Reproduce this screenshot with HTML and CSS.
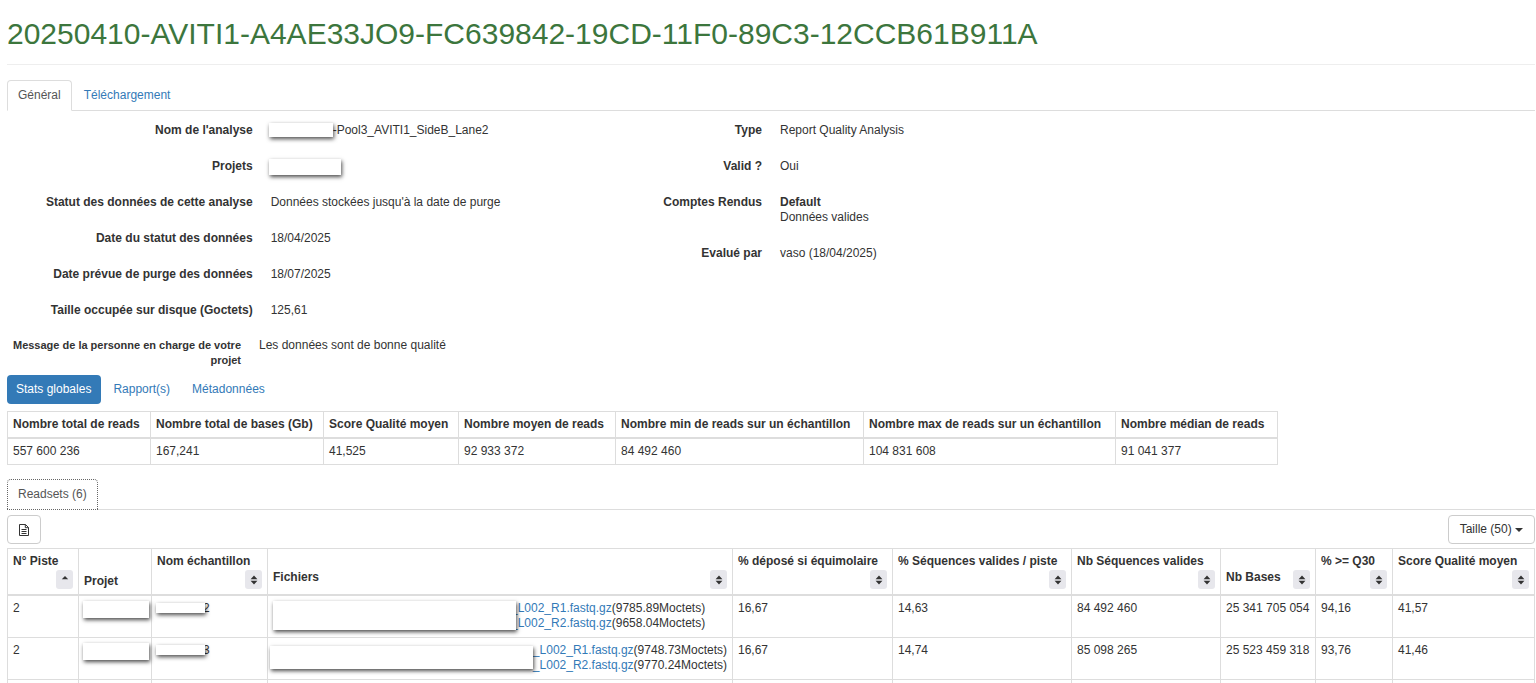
FILE: index.html
```html
<!DOCTYPE html>
<html lang="fr">
<head>
  <meta charset="UTF-8">
  <title>20250410-AVITI1-A4AE33JO9-FC639842-19CD-11F0-89C3-12CCB61B911A</title>
  <meta name="viewport" content="width=device-width, initial-scale=1">
  <link rel="stylesheet" href="styles.css">
</head>
<body>
  <svg class="defs" aria-hidden="true">
    <symbol id="sort" viewBox="0 0 8 10"><path d="M4 0.5 7.4 4.2H0.6zM4 9.5 0.6 5.8H7.4z"/></symbol>
    <symbol id="sort-up" viewBox="0 0 8 10"><path d="M4 1 7.2 4.2H0.8z"/></symbol>
  </svg>

  <header class="page-header">
    <h1>20250410-AVITI1-A4AE33JO9-FC639842-19CD-11F0-89C3-12CCB61B911A</h1>
  </header>

  <ul class="tabs">
    <li><a class="active" href="#general">Général</a></li>
    <li><a href="#download">Téléchargement</a></li>
  </ul>

  <main id="general">
    <div class="details">
      <dl>
        <div class="field"><dt>Nom de l'analyse</dt><dd><span class="mask mask-name"></span>-Pool3_AVITI1_SideB_Lane2</dd></div>
        <div class="field"><dt>Projets</dt><dd><span class="mask mask-projects"></span></dd></div>
        <div class="field"><dt>Statut des données de cette analyse</dt><dd>Données stockées jusqu'à la date de purge</dd></div>
        <div class="field"><dt>Date du statut des données</dt><dd>18/04/2025</dd></div>
        <div class="field"><dt>Date prévue de purge des données</dt><dd>18/07/2025</dd></div>
        <div class="field"><dt>Taille occupée sur disque (Goctets)</dt><dd>125,61</dd></div>
      </dl>
      <dl>
        <div class="field"><dt>Type</dt><dd>Report Quality Analysis</dd></div>
        <div class="field"><dt>Valid ?</dt><dd>Oui</dd></div>
        <div class="field"><dt>Comptes Rendus</dt><dd><strong>Default</strong><br>Données valides</dd></div>
        <div class="field"><dt>Evalué par</dt><dd>vaso (18/04/2025)</dd></div>
      </dl>
    </div>
    <dl class="message">
      <dt>Message de la personne en charge de votre projet</dt>
      <dd>Les données sont de bonne qualité</dd>
    </dl>

    <ul class="pills">
      <li><a class="active" href="#stats">Stats globales</a></li>
      <li><a href="#reports">Rapport(s)</a></li>
      <li><a href="#metadata">Métadonnées</a></li>
    </ul>

    <table class="table stats" id="stats">
      <colgroup>
        <col class="w-143"><col class="w-173"><col class="w-135"><col class="w-157"><col class="w-248"><col class="w-252"><col class="w-162">
      </colgroup>
      <thead>
        <tr>
          <th>Nombre total de reads</th>
          <th>Nombre total de bases (Gb)</th>
          <th>Score Qualité moyen</th>
          <th>Nombre moyen de reads</th>
          <th>Nombre min de reads sur un échantillon</th>
          <th>Nombre max de reads sur un échantillon</th>
          <th>Nombre médian de reads</th>
        </tr>
      </thead>
      <tbody>
        <tr>
          <td>557 600 236</td>
          <td>167,241</td>
          <td>41,525</td>
          <td>92 933 372</td>
          <td>84 492 460</td>
          <td>104 831 608</td>
          <td>91 041 377</td>
        </tr>
      </tbody>
    </table>

    <ul class="tabs tabs-readsets">
      <li><a class="active focused" href="#readsets">Readsets (6)</a></li>
    </ul>

    <div class="toolbar">
      <button type="button" class="btn btn-export" aria-label="Exporter">
        <svg width="10" height="12" viewBox="0 0 10 12"><path d="M0.5 0.5H6.5L9.5 3.5V11.5H0.5zM6.3 0.5V3.7H9.5M2.5 5.5H7.5M2.5 7.5H7.5M2.5 9.5H7.5"/></svg>
      </button>
      <button type="button" class="btn">Taille (50) <span class="caret"></span></button>
    </div>

    <table class="table readsets" id="readsets">
      <colgroup>
        <col class="w-71"><col class="w-73"><col class="w-116"><col><col class="w-160"><col class="w-179"><col class="w-149"><col class="w-95"><col class="w-77"><col class="w-142">
      </colgroup>
      <thead>
        <tr>
          <th><div class="head stacked"><span>N° Piste</span><button type="button" class="sort" aria-label="Trier"><svg><use href="#sort-up"/></svg></button></div></th>
          <th>Projet</th>
          <th><div class="head stacked"><span>Nom échantillon</span><button type="button" class="sort" aria-label="Trier"><svg><use href="#sort"/></svg></button></div></th>
          <th><div class="head"><span>Fichiers</span><button type="button" class="sort" aria-label="Trier"><svg><use href="#sort"/></svg></button></div></th>
          <th><div class="head stacked"><span>% déposé si équimolaire</span><button type="button" class="sort" aria-label="Trier"><svg><use href="#sort"/></svg></button></div></th>
          <th><div class="head stacked"><span>% Séquences valides / piste</span><button type="button" class="sort" aria-label="Trier"><svg><use href="#sort"/></svg></button></div></th>
          <th><div class="head stacked"><span>Nb Séquences valides</span><button type="button" class="sort" aria-label="Trier"><svg><use href="#sort"/></svg></button></div></th>
          <th><div class="head"><span>Nb Bases</span><button type="button" class="sort" aria-label="Trier"><svg><use href="#sort"/></svg></button></div></th>
          <th><div class="head stacked"><span>% &gt;= Q30</span><button type="button" class="sort" aria-label="Trier"><svg><use href="#sort"/></svg></button></div></th>
          <th><div class="head stacked"><span>Score Qualité moyen</span><button type="button" class="sort" aria-label="Trier"><svg><use href="#sort"/></svg></button></div></th>
        </tr>
      </thead>
      <tbody>
        <tr>
          <td>2</td>
          <td><span class="mask mask-project"></span></td>
          <td><span class="mask mask-sample"></span>2</td>
          <td>
            <div class="files">
              <span class="mask mask-files"></span>
              <div><a href="#r1">_L002_R1.fastq.gz</a>(9785.89Moctets)<br><a href="#r2">_L002_R2.fastq.gz</a>(9658.04Moctets)</div>
            </div>
          </td>
          <td>16,67</td>
          <td>14,63</td>
          <td>84 492 460</td>
          <td>25 341 705 054</td>
          <td>94,16</td>
          <td>41,57</td>
        </tr>
        <tr>
          <td>2</td>
          <td><span class="mask mask-project"></span></td>
          <td><span class="mask mask-sample"></span>3</td>
          <td>
            <div class="files">
              <span class="mask mask-files-wide"></span>
              <div><a href="#r1">_L002_R1.fastq.gz</a>(9748.73Moctets)<br><a href="#r2">_L002_R2.fastq.gz</a>(9770.24Moctets)</div>
            </div>
          </td>
          <td>16,67</td>
          <td>14,74</td>
          <td>85 098 265</td>
          <td>25 523 459 318</td>
          <td>93,76</td>
          <td>41,46</td>
        </tr>
        <tr><td></td><td></td><td></td><td></td><td></td><td></td><td></td><td></td><td></td><td></td></tr>
      </tbody>
    </table>
  </main>
</body>
</html>
```

FILE: styles.css
```css
* {
  box-sizing: border-box;
}

body {
  margin: 0;
  padding: 0 1px 0 7px;
  height: 100vh;
  overflow: hidden;
  background: #fff;
  color: #333;
  font-family: "Liberation Sans", Arial, sans-serif;
  font-size: 12px;
  line-height: 15px;
}

a {
  color: #337ab7;
  text-decoration: none;
}

ul, dl, dd {
  margin: 0;
  padding: 0;
  list-style: none;
}

dt, th {
  font-weight: bold;
}

.defs {
  display: none;
}

.page-header {
  padding: 16px 0 12px;
  border-bottom: 1px solid #eee;
}

.page-header h1 {
  margin: 0;
  color: #3c763d;
  font-size: 30px;
  font-weight: normal;
  line-height: 36px;
}

/* tabs */
.tabs {
  display: flex;
  margin-top: 15px;
  border-bottom: 1px solid #ddd;
}

.tabs a {
  display: block;
  margin: 0 1px -1px 0;
  padding: 7px 10px;
  border: 1px solid transparent;
  border-radius: 4px 4px 0 0;
}

.tabs a.active {
  color: #555;
  background: #fff;
  border-color: #ddd;
  border-bottom-color: #fff;
}

.tabs a.focused {
  border: 1px dotted #666;
}

/* details */
.details {
  display: grid;
  grid-template-columns: repeat(3, 1fr);
  padding-top: 12px;
}

.field {
  display: grid;
  grid-template-columns: 1fr 1fr;
  margin-bottom: 21px;
}

.field:last-child {
  margin-bottom: 20px;
}

dt {
  padding-right: 9px;
  text-align: right;
}

dd {
  padding-left: 9px;
}

.message {
  display: grid;
  grid-template-columns: 1fr 5fr;
  margin-left: -14px;
}

.message dt {
  padding-left: 9px;
  font-size: 11px;
}

/* redacted values */
.mask {
  display: inline-block;
  position: relative;
  height: 14px;
  background: #fff;
  box-shadow: 1px 2px 4px rgba(0, 0, 0, .7);
  vertical-align: top;
}

.mask-name {
  width: 64px;
  margin-left: -2px;
}

.mask-projects {
  width: 72px;
  height: 16px;
  margin: 0 0 -1px -2px;
}

.mask-project {
  width: 66px;
  height: 17px;
  margin-left: -1px;
}

.mask-sample {
  width: 49px;
  height: 10px;
  margin: 2px -2px 0 -1px;
}

.mask-files {
  width: 243px;
  height: 29px;
  margin-right: -5px;
}

.mask-files-wide {
  width: 263px;
  height: 23px;
  margin: 3px 0 0 -3px;
}

/* pills */
.pills {
  display: flex;
  gap: 3px;
  margin-top: 7px;
}

.pills a {
  display: block;
  padding: 7px 10px 7px 9px;
  border-radius: 4px;
}

.pills a.active {
  color: #fff;
  background: #337ab7;
}

/* tables */
.table {
  border-collapse: collapse;
  table-layout: fixed;
}

.table th,
.table td {
  padding: 5px;
  border: 1px solid #ddd;
  text-align: left;
  vertical-align: top;
}

.table th {
  border-bottom-width: 2px;
  vertical-align: bottom;
  white-space: nowrap;
}

.stats {
  width: 1270px;
  margin-top: 7px;
}

.readsets {
  width: 100%;
}

.readsets td {
  padding-bottom: 6px;
  height: 42px;
  white-space: nowrap;
}

.w-71 { width: 71px; }
.w-73 { width: 73px; }
.w-77 { width: 77px; }
.w-95 { width: 95px; }
.w-116 { width: 116px; }
.w-135 { width: 135px; }
.w-142 { width: 142px; }
.w-143 { width: 143px; }
.w-149 { width: 149px; }
.w-157 { width: 157px; }
.w-160 { width: 160px; }
.w-162 { width: 162px; }
.w-173 { width: 173px; }
.w-179 { width: 179px; }
.w-248 { width: 248px; }
.w-252 { width: 252px; }

.head {
  display: flex;
  flex-wrap: wrap;
  justify-content: space-between;
}

.head.stacked {
  row-gap: 1px;
  justify-content: flex-end;
}

.head.stacked span {
  width: 100%;
}

.sort {
  width: 17px;
  height: 19px;
  padding: 0;
  border: 0;
  border-radius: 3px;
  background: #e7e7ec;
  color: #333;
}

.sort svg {
  display: block;
  width: 8px;
  height: 10px;
  margin: 0 auto;
  fill: currentColor;
}

.files {
  display: flex;
}

/* toolbar */
.tabs-readsets {
  margin-top: 14px;
}

.toolbar {
  display: flex;
  justify-content: space-between;
  padding: 5px 0 4px;
}

.btn {
  height: 29px;
  padding: 0 11px;
  border: 1px solid #ccc;
  border-radius: 4px;
  background: #fff;
  color: #333;
  font: inherit;
}

.btn-export svg {
  display: block;
  fill: none;
  stroke: #333;
}

.caret {
  display: inline-block;
  border: 4px solid transparent;
  border-top-color: #333;
  border-bottom: 0;
  vertical-align: middle;
}
```
